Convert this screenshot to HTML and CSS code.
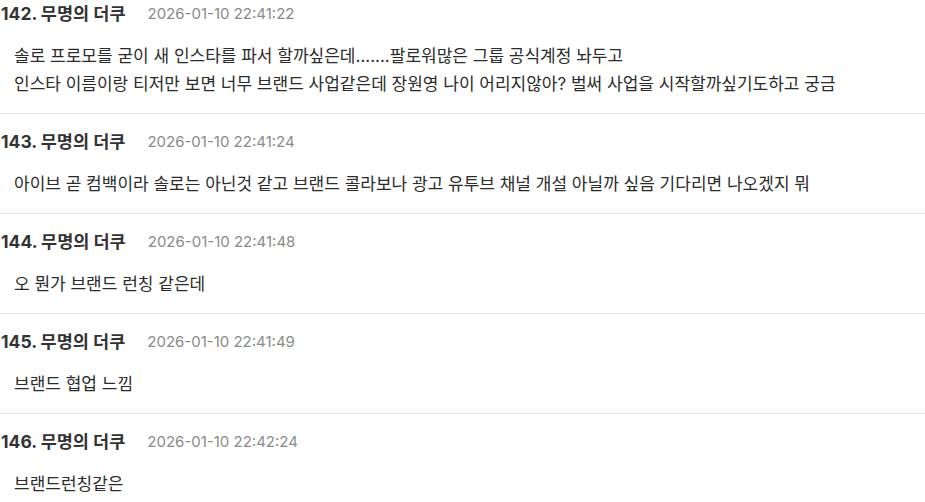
FILE: index.html
```html
<!DOCTYPE html>
<html lang="ko">
<head>
<meta charset="utf-8">
<link rel="stylesheet" href="styles.css">
</head>
<body>
<div class="list">
  <div class="item">
    <div class="head"><span class="name">142. 무명의 더쿠</span><span class="time">2026-01-10 22:41:22</span></div>
    <div class="body">솔로 프로모를 굳이 새 인스타를 파서 할까싶은데.......팔로워많은 그룹 공식계정 놔두고<br>인스타 이름이랑 티저만 보면 너무 브랜드 사업같은데 장원영 나이 어리지않아? 벌써 사업을 시작할까싶기도하고 궁금</div>
  </div>
  <div class="item">
    <div class="head"><span class="name">143. 무명의 더쿠</span><span class="time">2026-01-10 22:41:24</span></div>
    <div class="body">아이브 곧 컴백이라 솔로는 아닌것 같고 브랜드 콜라보나 광고 유투브 채널 개설 아닐까 싶음 기다리면 나오겠지 뭐</div>
  </div>
  <div class="item">
    <div class="head"><span class="name">144. 무명의 더쿠</span><span class="time">2026-01-10 22:41:48</span></div>
    <div class="body">오 뭔가 브랜드 런칭 같은데</div>
  </div>
  <div class="item">
    <div class="head"><span class="name">145. 무명의 더쿠</span><span class="time">2026-01-10 22:41:49</span></div>
    <div class="body">브랜드 협업 느낌</div>
  </div>
  <div class="item">
    <div class="head"><span class="name">146. 무명의 더쿠</span><span class="time">2026-01-10 22:42:24</span></div>
    <div class="body">브랜드런칭같은</div>
  </div>
</div>
</body>
</html>
```
FILE: styles.css
```css
html, body {
  margin: 0;
  padding: 0;
  background: #fff;
}
body {
  font-family: Inter, "Noto Sans CJK KR", sans-serif;
  color: #2b2b2b;
  overflow: hidden;
}
.list {
  margin-top: -14px;
}
.item {
  padding: 18px 0 15px 0;
  border-bottom: 1px solid #e6e6e6;
}
.head {
  display: flex;
  align-items: center;
  height: 20px;
  line-height: 20px;
}
.name {
  font-size: 17.5px;
  font-weight: 700;
  color: #333;
  padding-left: 1px;
}
.time {
  font-size: 15px;
  color: #8a8a8a;
  margin-left: 22px;
}
.body {
  margin-top: 18px;
  padding-left: 14px;
  font-size: 17px;
  line-height: 28px;
  color: #2b2b2b;
}
```
